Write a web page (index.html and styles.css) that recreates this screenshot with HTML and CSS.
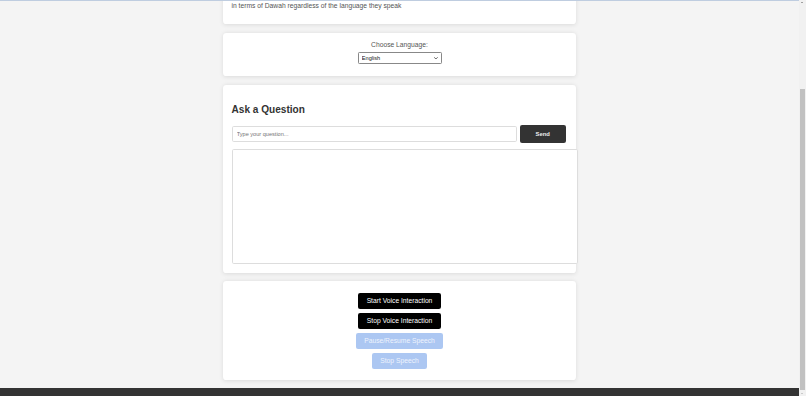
FILE: index.html
```html
<!DOCTYPE html>
<html lang="en">
<head>
<meta charset="utf-8">
<title>Dawah Assistant</title>
<link rel="stylesheet" href="styles.css">
</head>
<body>
<div class="topline"></div>
<header class="header">
  <h1>Dawah AI Assistant</h1>
</header>
<main class="main">
  <section class="card">
    <h2 class="card-title">About</h2>
    <p class="about-text">This assistant is made to serve the Muslim ummah and to assist Muslims</p>
    <p class="about-text">in terms of Dawah regardless of the language they speak</p>
  </section>
  <section class="card lang-card">
    <div class="lang">
      <label class="lang-label" for="language">Choose Language:</label>
      <span class="select-wrap">
        <select class="lang-select" id="language">
          <option>English</option>
          <option>العربية</option>
          <option>Français</option>
          <option>Español</option>
        </select>
        <svg class="select-arrow" viewBox="0 0 10 6" width="9" height="6" aria-hidden="true"><path d="M1 1l4 4 4-4" fill="none" stroke="#222" stroke-width="1.8" stroke-linecap="round" stroke-linejoin="round"/></svg>
      </span>
    </div>
  </section>
  <section class="card">
    <h2 class="ask-title">Ask a Question</h2>
    <div class="ask-row">
      <input class="ask-input" type="text" placeholder="Type your question...">
      <button class="send">Send</button>
    </div>
    <div class="response"></div>
  </section>
  <section class="card">
    <div class="voice">
      <button class="btn btn-dark">Start Voice Interaction</button>
      <button class="btn btn-dark">Stop Voice Interaction</button>
      <button class="btn btn-blue" disabled>Pause/Resume Speech</button>
      <button class="btn btn-blue" disabled>Stop Speech</button>
    </div>
  </section>
</main>
<footer class="footer"></footer>
<div class="fake-scrollbar" aria-hidden="true">
  <span class="sb-up"></span>
  <span class="sb-thumb"></span>
  <span class="sb-down"></span>
</div>
<script src="script.js"></script>
</body>
</html>
```
FILE: styles.css
```css
html {
  zoom: 0.42;
}
body {
  margin: 0;
  background: #f4f4f4;
  font-family: "Liberation Sans", Arial, sans-serif;
  color: #333;
}
.topline {
  position: fixed;
  top: 0;
  left: 0;
  right: 0;
  height: 3px;
  background: #bfcde0;
  z-index: 10;
}
.header {
  background: #333;
  color: #fff;
  text-align: center;
  padding: 35px 20px;
}
.header h1 {
  margin: 0;
  font-size: 32px;
}
.main {
  display: flex;
  flex-direction: column;
  gap: 21px;
  padding: 21px 16.7px 19px 0;
}
.card {
  width: 800px;
  margin: 0 auto;
  padding: 20px;
  background: #fff;
  border-radius: 8px;
  box-shadow: 0 2px 10px rgba(0, 0, 0, 0.1);
}
.card-title {
  font-size: 24px;
}
.about-text {
  margin: 16px 0;
  color: #555;
  font-size: 16px;
}
.lang-card {
  text-align: center;
}
.lang {
  display: flex;
  flex-direction: column;
  align-items: center;
  gap: 7px;
  padding-bottom: 8px;
}
.lang-label {
  font-size: 16px;
  line-height: 18.4px;
  color: #555;
}
.select-wrap {
  position: relative;
  display: block;
  width: 200px;
  height: 29px;
}
.lang-select {
  appearance: none;
  -webkit-appearance: none;
  box-sizing: border-box;
  display: block;
  width: 200px;
  height: 29px;
  padding: 0 22px 0 8px;
  font-family: "Liberation Sans", Arial, sans-serif;
  font-size: 13.33px;
  border: 1px solid #888;
  border-radius: 3px;
  background: #fff;
  color: #111;
}
.select-arrow {
  position: absolute;
  right: 9px;
  top: 12px;
}
.ask-title {
  font-size: 24px;
  margin: 27px 0 22px;
  color: #333;
}
.ask-row {
  display: flex;
  align-items: center;
  gap: 6px;
  padding-right: 4px;
}
.ask-input {
  flex: 1;
  padding: 9px 10px;
  border: 1px solid #ddd;
  border-radius: 4px;
  font-family: "Liberation Sans", Arial, sans-serif;
  font-size: 13.33px;
}
.send {
  background: #333;
  color: #eee;
  border: none;
  border-radius: 5px;
  padding: 15px 38px;
  font-family: "Liberation Sans", Arial, sans-serif;
  font-size: 14px;
  font-weight: bold;
}
.response {
  margin-top: 13px;
  width: 100%;
  height: 250px;
  padding: 10px;
  border: 1px solid #ddd;
  border-radius: 4px;
  background: #fff;
  overflow-y: auto;
}
.voice {
  display: flex;
  flex-direction: column;
  align-items: center;
  gap: 10px;
  padding: 7px 0 6px;
}
.btn {
  font-family: "Liberation Sans", Arial, sans-serif;
  font-size: 16px;
  line-height: 18px;
  padding: 10px 20px;
  border: none;
  border-radius: 5px;
  color: #fff;
}
.btn-dark {
  background: #000;
}
.btn-blue {
  background: #acc7f2;
  color: #eef3fd;
}
.footer {
  height: 20px;
  background: #333;
}
.fake-scrollbar {
  position: fixed;
  top: 0;
  right: 0;
  bottom: 0;
  width: 16.7px;
  background: #f1f1f1;
  z-index: 20;
}
.sb-thumb {
  position: absolute;
  left: 2.5px;
  right: 2.5px;
  top: 212px;
  bottom: 14px;
  background: #c1c1c1;
}
.sb-up,
.sb-down {
  position: absolute;
  left: 4.5px;
  width: 0;
  height: 0;
  border-left: 4px solid transparent;
  border-right: 4px solid transparent;
}
.sb-up {
  top: 5px;
  border-bottom: 4px solid #505050;
}
.sb-down {
  bottom: 5px;
  border-top: 4px solid #a3a3a3;
}
```
FILE: script.js
```js
function toBottom() {
  window.scrollTo(0, document.documentElement.scrollHeight);
}
toBottom();
window.addEventListener('load', toBottom);
```
